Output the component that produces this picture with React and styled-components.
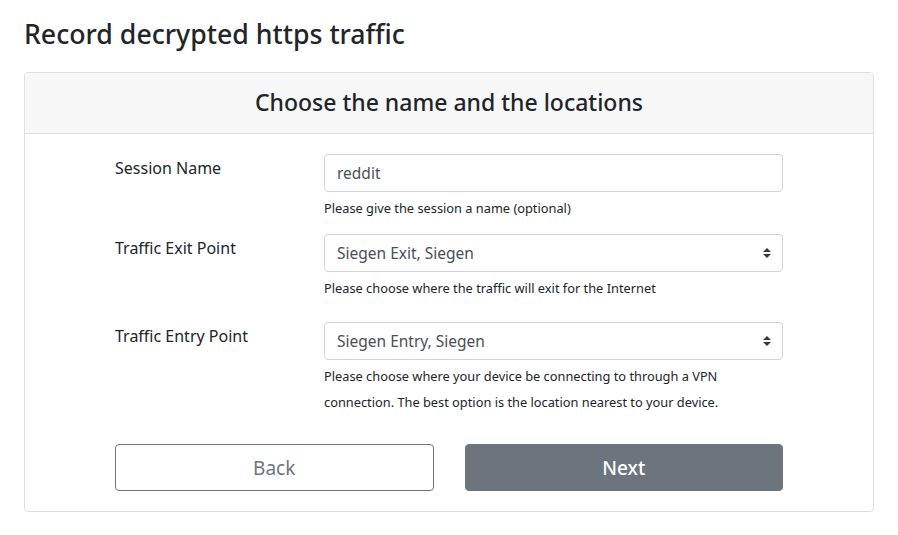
import React from "react";
import styled, { createGlobalStyle } from "styled-components";

const GlobalStyle = createGlobalStyle`
  body {
    margin: 0;
    background: #fff;
    color: #212529;
    font-family: "Noto Sans", "Open Sans", sans-serif;
  }
  * { box-sizing: border-box; }
`;

const Page = styled.div`
  padding: 18px 24px 0 24px;
  width: 898px;
`;

const Title = styled.h3`
  margin: 0 0 22px 0;
  font-size: 26.7px;
  font-weight: 500;
  line-height: 1.2;
`;

const Card = styled.div`
  width: 850px;
  border: 1px solid #dfdfdf;
  border-radius: 4px;
  overflow: hidden;
`;

const CardHeader = styled.div`
  background: #f7f7f7;
  border-bottom: 1px solid #dfdfdf;
  padding: 11px 20px 13px;
  text-align: center;
  h4 {
    margin: 0;
    font-size: 23px;
    font-weight: 500;
    line-height: 36px;
  }
`;

const CardBody = styled.div`
  padding: 20px 20px 20px 90px;
`;

const Form = styled.form`
  width: 668px;
`;

const Row = styled.div`
  display: grid;
  grid-template-columns: 209px 1fr;
  margin-bottom: ${(p) => p.gap}px;
`;

const Label = styled.label`
  font-size: 16px;
  line-height: 24px;
  padding-top: 2px;
`;

const Field = styled.div`
  display: flex;
  flex-direction: column;
`;

const Input = styled.input`
  height: 38px;
  width: 100%;
  border: 1px solid #ced4da;
  border-radius: 4px;
  padding: 0 12px;
  font-family: inherit;
  font-size: 15.5px;
  color: #495057;
  outline: none;
`;

const SelectWrap = styled.div`
  position: relative;
  svg {
    position: absolute;
    right: 12px;
    top: 14px;
    pointer-events: none;
  }
`;

const Select = styled.select`
  appearance: none;
  height: 38px;
  width: 100%;
  border: 1px solid #ced4da;
  border-radius: 4px;
  padding: 0 28px 0 12px;
  background: #fff;
  font-family: inherit;
  font-size: 15.5px;
  color: #495057;
  outline: none;
`;

const Help = styled.small`
  display: block;
  margin-top: 3px;
  font-size: 12.8px;
  line-height: 26px;
  color: #212529;
`;

const Buttons = styled.div`
  display: grid;
  grid-template-columns: 1fr 1fr;
  gap: 31px;
  margin-top: 29px;
`;

const Button = styled.button`
  height: 47px;
  border-radius: 4px;
  font-family: inherit;
  font-size: 19px;
  border: 1px solid #6c757d;
  background: ${(p) => (p.primary ? "#6c757d" : "#fff")};
  color: ${(p) => (p.primary ? "#fff" : "#6c757d")};
  font-weight: ${(p) => (p.primary ? 500 : 400)};
`;

const Arrows = () => (
  <svg width="8" height="10" viewBox="0 0 4 5">
    <path d="M2 0L0 2h4zm0 5L0 3h4z" fill="#343a40" />
  </svg>
);

const SelectBox = ({ value }) => (
  <SelectWrap>
    <Select defaultValue={value}>
      <option>{value}</option>
    </Select>
    <Arrows />
  </SelectWrap>
);

export default function App() {
  return (
    <Page>
      <GlobalStyle />
      <Title>Record decrypted https traffic</Title>
      <Card>
        <CardHeader>
          <h4>Choose the name and the locations</h4>
        </CardHeader>
        <CardBody>
          <Form>
            <Row gap={13}>
              <Label>Session Name</Label>
              <Field>
                <Input defaultValue="reddit" />
                <Help>Please give the session a name (optional)</Help>
              </Field>
            </Row>
            <Row gap={21}>
              <Label>Traffic Exit Point</Label>
              <Field>
                <SelectBox value="Siegen Exit, Siegen" />
                <Help>Please choose where the traffic will exit for the Internet</Help>
              </Field>
            </Row>
            <Row gap={0}>
              <Label>Traffic Entry Point</Label>
              <Field>
                <SelectBox value="Siegen Entry, Siegen" />
                <Help>
                  Please choose where your device be connecting to through a VPN
                  <br />
                  connection. The best option is the location nearest to your device.
                </Help>
              </Field>
            </Row>
            <Buttons>
              <Button type="button">Back</Button>
              <Button type="button" primary>
                Next
              </Button>
            </Buttons>
          </Form>
        </CardBody>
      </Card>
    </Page>
  );
}
